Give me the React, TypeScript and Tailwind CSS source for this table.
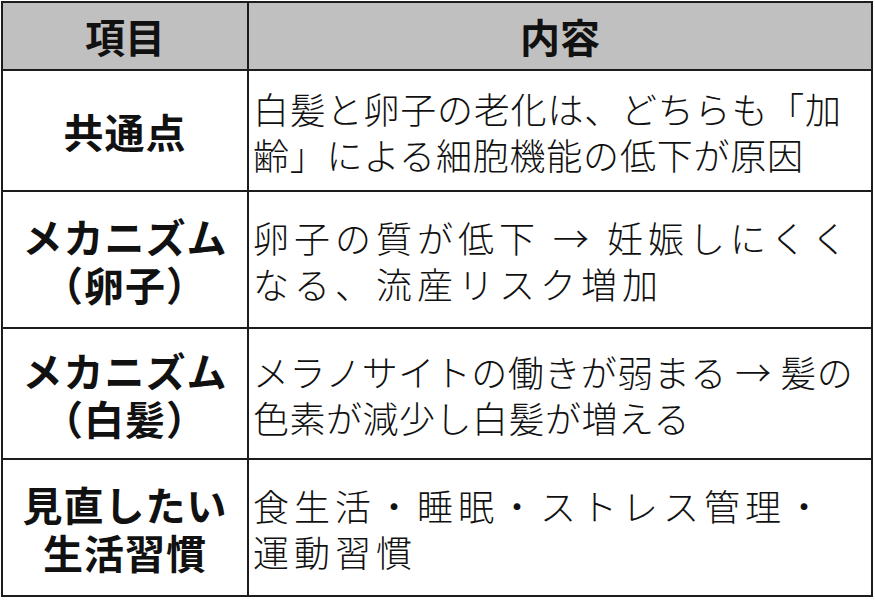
import React from "react";

const rows: {
  head: React.ReactNode;
  body: React.ReactNode;
  h: string;
  track: string;
}[] = [
  {
    head: "共通点",
    body: (
      <>
        白髪と卵子の老化は、どちらも「加
        <br />
        齢」による細胞機能の低下が原因
      </>
    ),
    h: "h-[121px]",
    track: "tracking-[0.8px]",
  },
  {
    head: (
      <>
        メカニズム
        <br />
        （卵子）
      </>
    ),
    body: (
      <>
        卵子の質が低下 → 妊娠しにくく
        <br />
        なる、流産リスク増加
      </>
    ),
    h: "h-[137px]",
    track: "tracking-[5px]",
  },
  {
    head: (
      <>
        メカニズム
        <br />
        （白髪）
      </>
    ),
    body: (
      <>
        メラノサイトの働きが弱まる → 髪の
        <br />
        色素が減少し白髪が増える
      </>
    ),
    h: "h-[131px]",
    track: "tracking-[0.5px]",
  },
  {
    head: (
      <>
        見直したい
        <br />
        生活習慣
      </>
    ),
    body: (
      <>
        食生活・睡眠・ストレス管理・
        <br />
        運動習慣
      </>
    ),
    h: "h-[135px]",
    track: "tracking-[5px]",
  },
];

export default function App() {
  return (
    <div className="w-[875px] h-[604px] bg-white pt-px pl-px font-['Noto_Sans_CJK_JP',sans-serif] text-[#111]">
      <div className="w-[872px] border-2 border-[#1c1c1c] grid grid-cols-[246px_622px]">
        {/* header */}
        <div className="h-[68px] bg-[#c0c0c0] border-r-2 border-b-2 border-[#1c1c1c] flex items-center justify-center font-bold text-[40px]">
          項目
        </div>
        <div className="h-[68px] bg-[#c0c0c0] border-b-2 border-[#1c1c1c] flex items-center justify-center font-bold text-[40px]">
          内容
        </div>
        {rows.map((r, i) => (
          <React.Fragment key={i}>
            <div
              className={`${r.h} border-r-2 border-[#1c1c1c] ${
                i < rows.length - 1 ? "border-b-2" : ""
              } flex items-center justify-center text-center font-bold text-[40px] leading-[48px] tracking-[1px]`}
            >
              <div>{r.head}</div>
            </div>
            <div
              className={`${r.h} border-[#1c1c1c] ${
                i < rows.length - 1 ? "border-b-2" : ""
              } flex items-center pl-[4px] font-['Noto_Sans_CJK_JP_Light','Noto_Sans_CJK_JP_DemiLight','Noto_Sans_CJK_JP',sans-serif] font-light text-[36px] leading-[46px] ${r.track}`}
            >
              <div>{r.body}</div>
            </div>
          </React.Fragment>
        ))}
      </div>
    </div>
  );
}
